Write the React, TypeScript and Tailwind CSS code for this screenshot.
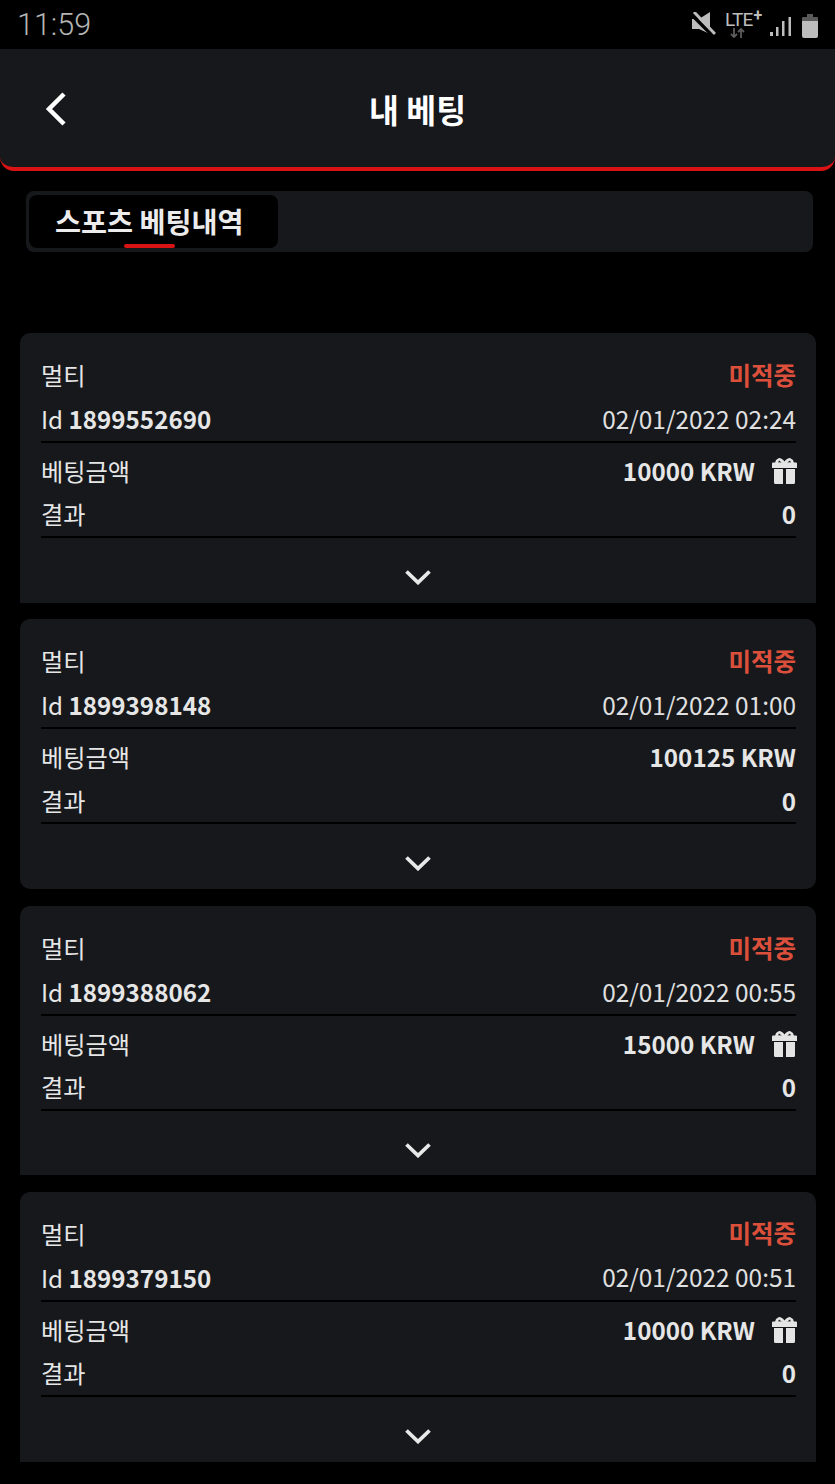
interface Bet {
  id: string;
  date: string;
  amount: string;
  gift: boolean;
  rounded: boolean;
  height: string;
}

const bets: Bet[] = [
  { id: '1899552690', date: '02/01/2022 02:24', amount: '10000 KRW', gift: true, rounded: false, height: 'h-[270px]' },
  { id: '1899398148', date: '02/01/2022 01:00', amount: '100125 KRW', gift: false, rounded: true, height: 'h-[270px]' },
  { id: '1899388062', date: '02/01/2022 00:55', amount: '15000 KRW', gift: true, rounded: false, height: 'h-[269.500px]' },
  { id: '1899379150', date: '02/01/2022 00:51', amount: '10000 KRW', gift: true, rounded: false, height: 'h-[270px]' },
];

function GiftIcon() {
  return (
    <svg width="25" height="26" viewBox="0 0 25 26" fill="#e4e4e4" className="ml-[17px] mr-[-1px]">
      {/* bow */}
      <path d="M4 2 7 0c2 0 4 1.500 5.500 3.500C14 1.500 16 0 18 0l3 2 1 3H3z" />
      <path d="M7 2.500l3 2.300H6zM18 2.500l-3 2.300h4z" fill="#16181c" />
      {/* lid */}
      <path d="M0 5.500a1 1 0 0 1 1-1h23a1 1 0 0 1 1 1V10H0z" />
      {/* body */}
      <path d="M2 11h9v15H3.500A1.500 1.500 0 0 1 2 24.500zM14 11h9v13.500a1.500 1.500 0 0 1-1.500 1.500H14z" />
    </svg>
  );
}

function StatusBar() {
  return (
    <div className="flex h-[49px] items-center justify-between pl-[17px] pr-[17px] pt-[2px] bg-black">
      <span className="text-[30.500px] font-light text-[#b4b4b4] font-['Roboto',sans-serif]">11:59</span>
      <div className="flex items-start text-[#bdbdbd] -mt-[1px]">
        {/* muted */}
        <svg width="24" height="26" viewBox="0 0 24 26" fill="#bdbdbd" className="mr-[9px]">
          <path d="M0 7h7l11-7v22L7 17H0z" />
          <path d="M0 3l20 20" stroke="#000" strokeWidth="3.500" />
          <path d="M2 0l21 22" stroke="#bdbdbd" strokeWidth="3" />
        </svg>
        {/* lte */}
        <div className="mr-[7px] flex h-[26px] w-[38px] flex-col font-['Roboto',sans-serif]">
          <div className="flex h-[16px] items-start">
            <span className="text-[19px] leading-[16px] tracking-[-0.8px] text-[#bdbdbd]">LTE</span>
            <span className="ml-[1px] -mt-[3px] text-[16px] leading-[14px] font-bold text-[#bdbdbd]">+</span>
          </div>
          <svg width="24" height="10" viewBox="0 0 24 10" fill="none" stroke="#5c5c5c" strokeWidth="1.800">
            <path d="M9 0v9M6 6l3 3 3-3M16 10V1M13 4l3-3 3 3" />
          </svg>
        </div>
        {/* signal */}
        <svg width="21" height="26" viewBox="0 0 21 26" fill="#bdbdbd" className="mr-[11px]">
          <rect x="0" y="20" width="3" height="4" />
          <rect x="6" y="15" width="2.500" height="9" />
          <rect x="12" y="9" width="2.500" height="15" />
          <rect x="18.500" y="5" width="2.500" height="19" />
        </svg>
        {/* battery */}
        <svg width="16" height="26" viewBox="0 0 16 26">
          <path d="M5 2h6v3h4a1 1 0 0 1 1 1v4H0V6a1 1 0 0 1 1-1h4z" fill="#5a5a5a" />
          <path d="M0 9h16v15a2 2 0 0 1-2 2H2a2 2 0 0 1-2-2z" fill="#bdbdbd" />
        </svg>
      </div>
    </div>
  );
}

function BetCard({ bet }: { bet: Bet }) {
  return (
    <div className={`${bet.height} flex flex-col bg-[#16181c] pl-[21px] pr-[20px] pt-[20px] rounded-t-[10px] ${bet.rounded ? 'rounded-b-[10px]' : ''}`}>
      <div className="flex h-[44px] items-center justify-between">
        <span>멀티</span>
        <span className="text-[24.500px] font-bold text-[#dc4f3b]">미적중</span>
      </div>
      <div className="box-content flex h-[44px] items-center justify-between border-b-[2px] border-black">
        <span>
          Id <span className="font-bold">{bet.id}</span>
        </span>
        <span className="text-[24.400px] font-normal text-[#e0e0e0]">{bet.date}</span>
      </div>
      <div className="mt-[6px] flex h-[44px] items-center justify-between">
        <span>베팅금액</span>
        <span className="flex items-center font-bold">
          {bet.amount}
          {bet.gift && <GiftIcon />}
        </span>
      </div>
      <div className="box-content flex h-[43px] items-center justify-between border-b-[2px] border-black">
        <span>결과</span>
        <span className="font-bold">0</span>
      </div>
      <div className="flex justify-center pt-[32px] pr-[1px]">
        <svg width="26" height="15" viewBox="0 0 26 15" fill="none" stroke="#e8e8e8" strokeWidth="3.800">
          <path d="M1.500 1.500 13 12.500 24.500 1.500" />
        </svg>
      </div>
    </div>
  );
}

export default function App() {
  return (
    <div className="h-[1484px] w-[835px] overflow-hidden bg-black font-['Noto_Sans_CJK_KR','Noto_Sans',sans-serif] text-[24.200px] leading-none text-[#e6e6e6]">
      <StatusBar />
      {/* Header */}
      <div className="relative flex h-[122px] items-center justify-center rounded-b-[14px] border-b-[4px] border-[#d91313] bg-[#16181c] pt-[3px]">
        <svg width="22" height="34" viewBox="0 0 22 34" fill="none" stroke="#fff" strokeWidth="4.500" className="absolute left-[45px] top-[43px]">
          <path d="M19 2 4 17l15 15" />
        </svg>
        <span className="text-[32.500px] font-bold text-white">내 베팅</span>
      </div>
      {/* Tabs */}
      <div className="mx-[26px] mt-[20px] flex h-[61px] w-[787px] items-center rounded-[8px] bg-[#16181c] pl-[3px]">
        <div className="relative flex h-[53px] w-[249px] items-center rounded-[8px] bg-black pl-[26px] text-[28.300px] font-bold text-[#ececec]">
          스포츠 베팅내역
          <div className="absolute bottom-0 left-[95px] h-[4px] w-[51px] rounded-full bg-[#d91313]" />
        </div>
      </div>
      {/* Bets */}
      <div className="mx-[20px] mt-[81px] flex w-[796px] flex-col gap-[16.400px]">
        {bets.map((bet) => (
          <BetCard key={bet.id} bet={bet} />
        ))}
      </div>
    </div>
  );
}
